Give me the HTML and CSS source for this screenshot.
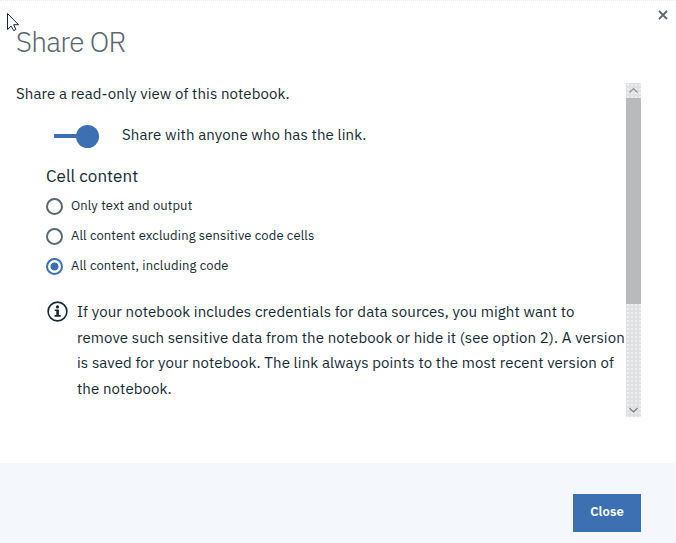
FILE: index.html
```html
<!DOCTYPE html>
<html lang="en">
<head>
<meta charset="utf-8">
<title>Share OR</title>
<link rel="stylesheet" href="styles.css">
</head>
<body>
<main class="modal">
  <header class="header">
    <h1 class="title">Share OR</h1>
    <button class="dismiss" aria-label="Dismiss"><svg width="10" height="10" viewBox="0 0 10 10"><path d="M1 1l8 8M9 1L1 9" stroke="#5a6872" stroke-width="1.8"/></svg></button>
  </header>
  <section class="body">
    <div class="content">
      <p class="intro">Share a read-only view of this notebook.</p>
      <div class="toggle-row">
        <span class="toggle"><span class="track"></span><span class="knob"></span></span>
        <span class="toggle-label">Share with anyone who has the link.</span>
      </div>
      <h2 class="subhead">Cell content</h2>
      <ul class="options">
        <li class="option"><span class="radio"></span><span class="label">Only text and output</span></li>
        <li class="option"><span class="radio"></span><span class="label">All content excluding sensitive code cells</span></li>
        <li class="option"><span class="radio checked"></span><span class="label">All content, including code</span></li>
      </ul>
      <div class="note">
        <svg class="info" width="22" height="22" viewBox="0 0 22 22"><circle cx="10.5" cy="11.5" r="9.4" fill="none" stroke="#152935" stroke-width="1.6"/><circle cx="10.5" cy="6.9" r="1.6" fill="#152935"/><path d="M7.7 9.5h4.2v5.6h1.8v1.6H7.5v-1.6h1.8v-4H7.7z" fill="#152935"/></svg>
        <p class="note-text">If your notebook includes credentials for data sources, you might want to<br>remove such sensitive data from the notebook or hide it (see option 2). A version<br>is saved for your notebook. The link always points to the most recent version of<br>the notebook.</p>
      </div>
    </div>
    <div class="scrollbar">
      <svg class="arrow" width="15" height="15" viewBox="0 0 15 15"><path d="M3.5 9.5l4-4 4 4" fill="none" stroke="#8c9195" stroke-width="1.1"/></svg>
      <div class="thumb"></div>
      <svg class="arrow down" width="15" height="15" viewBox="0 0 15 15"><path d="M3.5 6l4 4 4-4" fill="none" stroke="#737b81" stroke-width="1.1"/></svg>
    </div>
  </section>
  <footer class="footer"><button class="close">Close</button></footer>
</main>
<svg class="cursor" width="14" height="21" viewBox="0 0 14 21"><path d="M1.5 1.5v16l3.6-3.4 2.6 4.6 2.2-1.2-2.2-4.8h4.8z" fill="#fff" stroke="#152935" stroke-width="1"/></svg>
</body>
</html>
```
FILE: styles.css
```css
* { box-sizing: border-box; }
body {
  margin: 0;
  font-family: "IBM Plex Sans", Roboto, "Open Sans", sans-serif;
  color: #152935;
  background: #fff;
}
h1, h2, p, ul { margin: 0; padding: 0; font-weight: 400; }
button { font: inherit; border: 0; padding: 0; background: none; }
.modal {
  width: 676px;
  height: 543px;
  display: flex;
  flex-direction: column;
  border-top: 1px dotted #ebebeb;
}
.header {
  display: flex;
  justify-content: space-between;
  height: 82px;
  padding: 9px 8px 0 16px;
}
.title {
  padding-top: 14px;
  font-size: 28px;
  line-height: 36px;
  font-weight: 300;
  letter-spacing: -.75px;
  color: #5a6872;
}
.dismiss { width: 10px; height: 10px; }
.dismiss svg { display: block; }
.body {
  display: flex;
  justify-content: space-between;
  height: 334px;
  padding: 0 35px 0 16px;
}
.content { flex: 1; min-width: 0; white-space: nowrap; }
.intro { font-size: 15px; line-height: 22px; letter-spacing: .1px; }
.toggle-row { display: flex; align-items: center; height: 24px; margin: 18px 0 0 38px; }
.toggle { display: flex; align-items: center; width: 68px; padding-top: 2px; }
.track { width: 23px; height: 4px; background: #3d70b2; }
.knob { width: 23px; height: 23px; border-radius: 50%; background: #3d70b2; margin-left: -.7px; }
.toggle-label { font-size: 15px; line-height: 20px; letter-spacing: .1px; }
.subhead { margin: 17px 0 0 30px; font-size: 17px; line-height: 24px; letter-spacing: .05px; }
.options { list-style: none; margin: 3px 0 0 30px; }
.option { display: flex; align-items: center; height: 30px; gap: 8px; }
.radio {
  width: 17px;
  height: 17px;
  border: 2px solid #5a6872;
  border-radius: 50%;
  margin-top: 1px;
}
.radio.checked {
  border-color: #3d70b2;
  background: radial-gradient(circle, #3d70b2 3.7px, transparent 4.3px);
}
.label { font-size: 13px; line-height: 18px; letter-spacing: .12px; }
.note { display: flex; gap: 8px; margin: 18px 0 0 31px; }
.info { flex: none; margin-top: 1px; }
.note-text { font-size: 15px; line-height: 25.6px; letter-spacing: .1px; }
.scrollbar {
  display: flex;
  flex: none;
  flex-direction: column;
  width: 15px;
  height: 334px;
  background: #dfe0e2 radial-gradient(circle, #fff .6px, transparent .8px) 0 0 / 4px 4px;
}
.arrow { display: block; flex: none; }
.down { margin-top: auto; }
.thumb { height: 206px; background: #b9babb; }
.footer {
  display: flex;
  justify-content: flex-end;
  height: 80px;
  margin-top: auto;
  padding: 31px 35px 0 0;
  background: #f4f7fb;
}
.close {
  width: 68px;
  height: 38px;
  background: #3d70b2;
  color: #fff;
  font-size: 13px;
  font-weight: 600;
  letter-spacing: .1px;
  line-height: 36px;
  padding-bottom: 2px;
}
.cursor { position: absolute; left: 6px; top: 12px; }
```
